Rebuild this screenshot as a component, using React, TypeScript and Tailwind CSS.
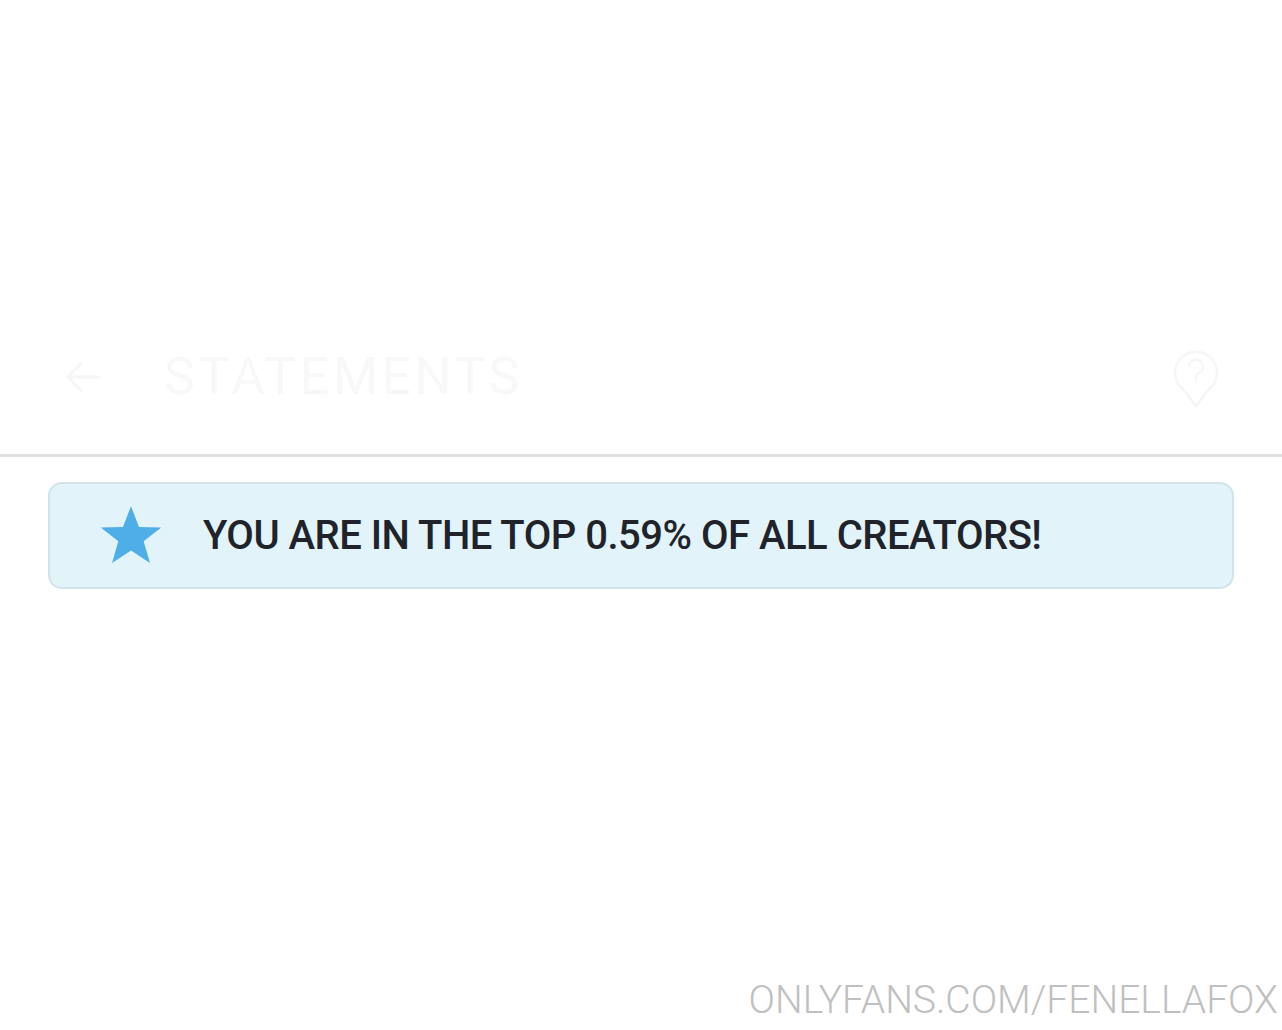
import React from "react";

export default function App() {
  return (
    <div className="w-[1282px] h-[1030px] bg-white relative overflow-hidden" style={{ fontFamily: "Roboto, 'Noto Sans', sans-serif" }}>
      <div className="h-[300px]" />
      <div className="h-[154px] flex items-center px-[60px] relative">
        <svg width="46" height="46" viewBox="0 0 24 24" fill="none" stroke="#f6f6f6" strokeWidth="1.6" strokeLinecap="round" strokeLinejoin="round">
          <path d="M20 12H5M11 5l-7 7 7 7" />
        </svg>
        <span className="ml-[58px] text-[52px] font-normal tracking-[3.5px] text-[#f8f8f8] leading-none">STATEMENTS</span>
        <div className="ml-auto">
          <svg width="52" height="62" viewBox="0 0 52 62" fill="none" stroke="#f6f6f6" strokeWidth="2.5">
            <path d="M26 60 L14 44 A21 21 0 1 1 38 44 Z" />
            <path d="M19 21 a7 7 0 1 1 10 6 c-2 1 -3 3 -3 5 v3" />
          </svg>
        </div>
      </div>
      <div className="h-[3px] bg-[#e2e2e2]" />
      <div className="px-[48px] pt-[25px]">
        <div className="h-[107px] rounded-[14px] border-2 border-[#d2e3ea] bg-[#e2f3fa] flex items-center pl-[48px]">
          <svg width="66" height="66" viewBox="0 0 24 24" className="shrink-0 -mt-[2px]">
            <path fill="#4eaee8" d="M12 1.5l2.9 7.6 8.1.2-6.4 5 2.3 7.9L12 17.6l-6.9 4.6 2.3-7.9-6.4-5 8.1-.2z" />
          </svg>
          <span className="ml-[39px] text-[40px] font-medium text-[#20242a] leading-none tracking-[-0.5px]">
            YOU ARE IN THE TOP 0.59% OF ALL CREATORS!
          </span>
        </div>
      </div>
      <div className="absolute right-[4px] bottom-[10px] text-[39px] font-light text-[#c0c0c0] leading-none tracking-[0px]">
        ONLYFANS.COM/FENELLAFOX
      </div>
    </div>
  );
}
